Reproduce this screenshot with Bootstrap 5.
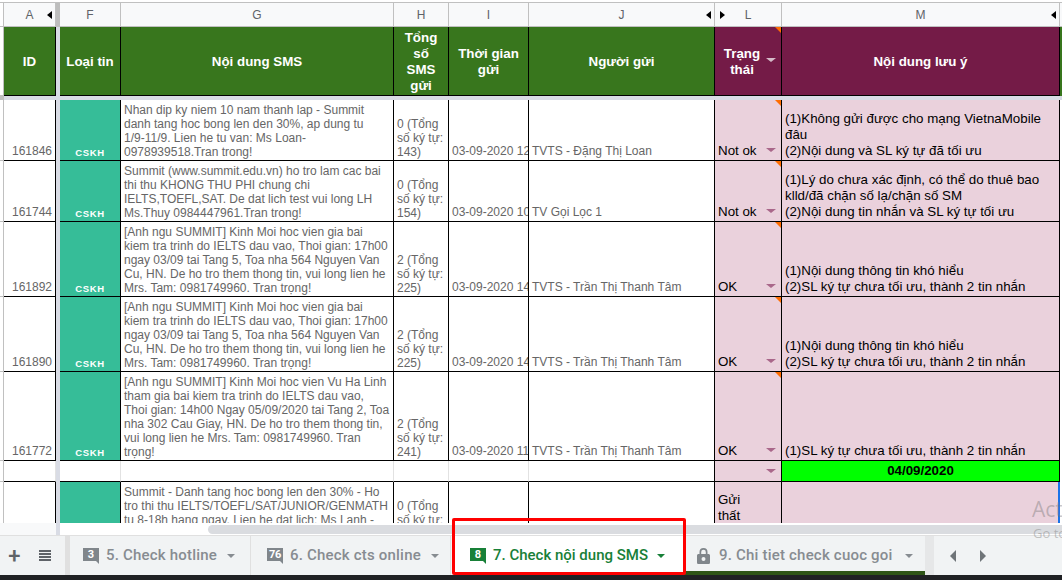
<!DOCTYPE html>
<html lang="vi">
<head>
  <meta charset="UTF-8" />
  <meta name="viewport" content="width=device-width, initial-scale=1" />
  <title>Check nội dung SMS</title>
  <link href="https://cdn.jsdelivr.net/npm/bootstrap@5.3.0/dist/css/bootstrap.min.css" rel="stylesheet" />
  <style>
    html, body { height: 100%; margin: 0; overflow: hidden; }
    body { font-family: "Liberation Sans", Arial, sans-serif; background: #fff; }

    /* vùng bảng tính */
    .sheet-wrap { height: 523px; padding-top: 2px; overflow: hidden; }
    .sheet-grid { table-layout: fixed; width: 1062px; border-collapse: separate; border-spacing: 0; border-top: 1px solid #c0c0c0; }
    .sheet-grid td, .sheet-grid th { padding: 0 3px; border-right: 1px solid #000; border-bottom: 1px solid #000; vertical-align: bottom; overflow: hidden; position: relative; }
    .sheet-grid .rh { padding: 0; border-right-color: #c0c0c0; border-bottom-color: #c0c0c0; background: #fff; }
    .sheet-grid .fz { padding: 0; border: 0; background: #d9dce5; }
    .sheet-grid .nn { padding: 0; border: 0; }

    .col-row td { height: 24px; background: #f8f9fa; border-right-color: #c0c0c0; border-bottom-color: #c0c0c0; color: #5f6368; font-size: 12px; text-align: center; vertical-align: middle; }
    .col-row td.fz { background: #bdbdbd; border-bottom: 1px solid #c0c0c0; }
    .col-row .nn { background: #f8f9fa; border-bottom: 1px solid #c0c0c0; }
    .hide-l::after, .hide-r::after { content: ""; position: absolute; top: 8px; border: 4px solid transparent; }
    .hide-l::after { right: 3px; border-left: 0; border-right: 5px solid #000; }
    .hide-r::after { left: 5px; border-right: 0; border-left: 5px solid #000; }

    .head-row th { height: 69px; padding-top: 2px; color: #fff; font-size: 13.33px; font-weight: 700; line-height: 16px; text-align: center; vertical-align: middle; }
    .head-row th.th-status { padding-right: 12px; padding-left: 0; }
    .bg-leaf { background: #38761d; }
    .bg-wine { background: #741b47; }
    .sep-row td { height: 4px; }
    .sep-row .fz-dark { background: #c0c0c0; }

    .r-61 { height: 61px; }
    .r-75 { height: 75px; }
    .r-89 { height: 89px; }
    .r-21 { height: 21px; }

    .cell-id { color: #666; font-size: 12px; line-height: 15px; text-align: right; padding-bottom: 1px !important; }
    .cell-type { background: #36bd98; color: #fff; font-size: 9.5px; font-weight: 700; letter-spacing: .6px; line-height: 12px; text-align: center; padding-bottom: 1px !important; }
    .cell-sms { color: #666; font-size: 12px; line-height: 14px; padding-bottom: 1px !important; }
    .cell-date { color: #666; font-size: 12px; line-height: 15px; white-space: nowrap; padding-bottom: 1px !important; }
    .cell-time { padding-right: 0 !important; }
    .cell-status { background: #ead1dc; color: #000; font-size: 13.33px; line-height: 16px; padding-bottom: 1px !important; }
    .cell-note { background: #ead1dc; color: #000; font-size: 13.33px; line-height: 16px; padding-bottom: 1px !important; }
    .cell-day { background: #00ff00; color: #000; font-size: 13.33px; font-weight: 700; text-align: center; vertical-align: middle !important; }
    .cell-blank { border-right-color: #e2e2e2 !important; }
    .cell-failed { padding-bottom: 2px !important; }
    .sel-edge { border-right: 2px solid #1a73e8 !important; }

    /* dấu ghi chú và mũi tên dropdown */
    .has-note::before { content: ""; position: absolute; top: 0; right: 0; border-top: 6px solid #ff6d01; border-left: 6px solid transparent; }
    .has-caret::after { content: ""; position: absolute; right: 5px; bottom: 8px; border-top: 4px solid #a9678a; border-left: 5px solid transparent; border-right: 5px solid transparent; }
    .caret-head::after { bottom: 33px; border-top-color: #d5bcc9; }

    /* thanh cuộn */
    .scroll-row { height: 13px; border-bottom: 1px solid #e0e0e0; background: #fff; }
    .scroll-left { width: 56px; background: #f8f9fa; }
    .scroll-fz { width: 4px; background: #d9dce5; }
    .scroll-gap { width: 148px; }
    .scroll-thumb { height: 9px; margin-top: 2px; border-radius: 5px 0 0 5px; background: #dadce0; }

    /* thanh tab */
    .tab-bar { height: 39px; background: #f1f3f4; font-family: Roboto, "Liberation Sans", sans-serif; font-size: 15px; font-weight: 500; color: #878c91; letter-spacing: .2px; white-space: nowrap; }
    .tab-tools { width: 65px; }
    .tool-plus { width: 29px; color: #5f6368; font-size: 22px; font-weight: 500; line-height: 1; }
    .tool-menu { width: 12px; height: 11px; margin-left: 10px; background: repeating-linear-gradient(#5f6368 0 2px, transparent 2px 3px); }
    .tab-sep { width: 5px; background: #e0e0e0; }
    .tab-sep-end { width: 9px; background: #e6e7e8; }
    .sheet-tab { gap: 7px; border-right: 1px solid #e0e0e0; }
    .tab-5 { width: 181px; padding-left: 13px; }
    .tab-6 { width: 200px; padding-left: 16px; margin-right: 2px; }
    .tab-7 { width: 230px; padding-left: 17px; margin-right: 1px; background: #fff; color: #188038; border-right: 0; letter-spacing: 0; }
    .tab-9 { width: 241px; padding-left: 13px; gap: 9px; border-right: 0; box-shadow: inset 0 -4px 0 #2f5517; }
    .tab-badge { flex-shrink: 0; width: 16px; height: 13px; background: #80868b; color: #fff; font-size: 11px; font-weight: 700; letter-spacing: 0; line-height: 13px; text-align: center; position: relative; margin-top: -2px; }
    .tab-badge::after { content: ""; position: absolute; right: 0; top: 13px; border-top: 3px solid #80868b; border-left: 3px solid transparent; }
    .badge-wide { letter-spacing: -.3px; }
    .tab-7 .tab-badge { background: #188038; }
    .tab-7 .tab-badge::after { border-top-color: #188038; }
    .tab-caret { margin-left: 3px; border-top: 4px solid currentColor; border-left: 4px solid transparent; border-right: 4px solid transparent; }
    .tab-7 .tab-caret { margin-left: 2px; }
    .tab-nav { gap: 24px; padding-left: 16px; }
    .nav-prev { border-top: 6px solid transparent; border-bottom: 6px solid transparent; border-right: 6px solid #6f7478; }
    .nav-next { border-top: 6px solid transparent; border-bottom: 6px solid transparent; border-left: 6px solid #6f7478; }
    .bottom-strip { height: 5px; background: #202124; }

    /* phần nằm đè lên trang */
    .page-shell { position: relative; height: 580px; overflow: hidden; }
    .red-box { position: absolute; left: 452px; top: 518px; width: 234px; height: 57px; border: 3px solid #f00; border-radius: 2px; pointer-events: none; }
    .win-mark { position: absolute; color: rgba(120, 120, 120, .42); font-family: "Open Sans", "Liberation Sans", sans-serif; line-height: 1; white-space: nowrap; }
    .win-title { left: 1032px; top: 499px; font-size: 21px; }
    .win-sub { left: 1033px; top: 527px; font-size: 13px; }
  </style>
</head>
<body>
<div class="page-shell">
  <div class="sheet-wrap">
    <table class="sheet-grid">
      <colgroup>
        <col style="width:4px"><col style="width:52px"><col style="width:4px"><col style="width:61px"><col style="width:273px"><col style="width:55px"><col style="width:80px"><col style="width:186px"><col style="width:67px"><col style="width:278px"><col style="width:2px">
      </colgroup>
      <tbody>
        <tr class="col-row">
          <td class="rh"></td><td class="hide-l">A</td><td class="fz"></td><td>F</td><td>G</td><td>H</td><td>I</td><td class="hide-l">J</td><td class="hide-r">L</td><td class="hide-l">M</td><td class="nn"></td>
        </tr>
        <tr class="head-row">
          <td class="rh"></td>
          <th class="bg-leaf">ID</th><td class="fz"></td>
          <th class="bg-leaf">Loại tin</th>
          <th class="bg-leaf">Nội dung SMS</th>
          <th class="bg-leaf">Tổng số SMS gửi</th>
          <th class="bg-leaf">Thời gian gửi</th>
          <th class="bg-leaf">Người gửi</th>
          <th class="bg-wine has-note has-caret caret-head th-status">Trạng thái</th>
          <th class="bg-wine">Nội dung lưu ý</th>
          <td class="nn bg-leaf"></td>
        </tr>
        <tr class="sep-row">
          <td class="fz fz-dark"></td><td class="fz"></td><td class="fz"></td><td class="fz"></td><td class="fz"></td><td class="fz"></td><td class="fz"></td><td class="fz"></td><td class="fz"></td><td class="fz"></td><td class="fz"></td>
        </tr>
        <tr class="r-61">
          <td class="rh"></td><td class="cell-id">161846</td><td class="fz"></td><td class="cell-type">CSKH</td>
          <td class="cell-sms">Nhan dip ky niem 10 nam thanh lap - Summit danh tang hoc bong len den 30%, ap dung tu<br>1/9-11/9. Lien he tu van: Ms Loan-<br>0978939518.Tran trong!</td>
          <td class="cell-sms">0 (Tổng số ký tự: 143)</td>
          <td class="cell-date cell-time">03-09-2020 12</td>
          <td class="cell-date">TVTS - Đặng Thị Loan</td>
          <td class="cell-status has-note has-caret">Not ok</td>
          <td class="cell-note">(1)Không gửi được cho mạng VietnaMobile đâu<br>(2)Nội dung và SL ký tự đã tối ưu</td>
          <td class="nn"></td>
        </tr>
        <tr class="r-61">
          <td class="rh"></td><td class="cell-id">161744</td><td class="fz"></td><td class="cell-type">CSKH</td>
          <td class="cell-sms">Summit (www.summit.edu.vn) ho tro lam cac bai thi thu KHONG THU PHI chung chi IELTS,TOEFL,SAT. De dat lich test vui long LH Ms.Thuy 0984447961.Tran trong!</td>
          <td class="cell-sms">0 (Tổng số ký tự: 154)</td>
          <td class="cell-date cell-time">03-09-2020 10</td>
          <td class="cell-date">TV Gọi Lọc 1</td>
          <td class="cell-status has-note has-caret">Not ok</td>
          <td class="cell-note">(1)Lý do chưa xác định, có thể do thuê bao klld/đã chặn số lạ/chặn số SM<br>(2)Nội dung tin nhắn và SL ký tự tối ưu</td>
          <td class="nn"></td>
        </tr>
        <tr class="r-75">
          <td class="rh"></td><td class="cell-id">161892</td><td class="fz"></td><td class="cell-type">CSKH</td>
          <td class="cell-sms">[Anh ngu SUMMIT] Kinh Moi hoc vien gia bai kiem tra trinh do IELTS dau vao, Thoi gian: 17h00 ngay 03/09 tai Tang 5, Toa nha 564 Nguyen Van Cu, HN. De ho tro them thong tin, vui long lien he Mrs. Tam: 0981749960. Tran trọng!</td>
          <td class="cell-sms">2 (Tổng số ký tự: 225)</td>
          <td class="cell-date cell-time">03-09-2020 14</td>
          <td class="cell-date">TVTS - Trần Thị Thanh Tâm</td>
          <td class="cell-status has-note has-caret">OK</td>
          <td class="cell-note">(1)Nội dung thông tin khó hiểu<br>(2)SL ký tự chưa tối ưu, thành 2 tin nhắn</td>
          <td class="nn"></td>
        </tr>
        <tr class="r-75">
          <td class="rh"></td><td class="cell-id">161890</td><td class="fz"></td><td class="cell-type">CSKH</td>
          <td class="cell-sms">[Anh ngu SUMMIT] Kinh Moi hoc vien gia bai kiem tra trinh do IELTS dau vao, Thoi gian: 17h00 ngay 03/09 tai Tang 5, Toa nha 564 Nguyen Van Cu, HN. De ho tro them thong tin, vui long lien he Mrs. Tam: 0981749960. Tran trọng!</td>
          <td class="cell-sms">2 (Tổng số ký tự: 225)</td>
          <td class="cell-date cell-time">03-09-2020 14</td>
          <td class="cell-date">TVTS - Trần Thị Thanh Tâm</td>
          <td class="cell-status has-note has-caret">OK</td>
          <td class="cell-note">(1)Nội dung thông tin khó hiểu<br>(2)SL ký tự chưa tối ưu, thành 2 tin nhắn</td>
          <td class="nn"></td>
        </tr>
        <tr class="r-89">
          <td class="rh"></td><td class="cell-id">161772</td><td class="fz"></td><td class="cell-type">CSKH</td>
          <td class="cell-sms">[Anh ngu SUMMIT] Kinh Moi hoc vien Vu Ha Linh tham gia bai kiem tra trinh do IELTS dau vao, Thoi gian: 14h00 Ngay 05/09/2020 tai Tang 2, Toa nha 302 Cau Giay, HN. De ho tro them thong tin, vui long lien he Mrs. Tam: 0981749960. Tran trọng!</td>
          <td class="cell-sms">2 (Tổng số ký tự: 241)</td>
          <td class="cell-date cell-time">03-09-2020 11</td>
          <td class="cell-date">TVTS - Trần Thị Thanh Tâm</td>
          <td class="cell-status has-note has-caret">OK</td>
          <td class="cell-note">(1)SL ký tự chưa tối ưu, thành 2 tin nhắn</td>
          <td class="nn"></td>
        </tr>
        <tr class="r-21">
          <td class="rh"></td><td class="cell-blank"></td><td class="fz"></td><td class="cell-blank"></td><td class="cell-blank"></td><td class="cell-blank"></td><td class="cell-blank"></td><td></td>
          <td class="cell-status has-caret"></td>
          <td class="cell-day">04/09/2020</td>
          <td class="nn"></td>
        </tr>
        <tr class="r-61">
          <td class="rh"></td><td></td><td class="fz"></td><td class="cell-type"></td>
          <td class="cell-sms">Summit - Danh tang hoc bong len den 30% - Ho tro thi thu IELTS/TOEFL/SAT/JUNIOR/GENMATH tu 8-18h hang ngay. Lien he dat lich: Ms Lanh -<br>&nbsp;</td>
          <td class="cell-sms">0 (Tổng số ký tự:<br>&nbsp;</td>
          <td class="cell-date"></td>
          <td class="cell-date"></td>
          <td class="cell-status cell-failed">Gửi<br>thất<br>&nbsp;</td>
          <td class="cell-note sel-edge"></td>
          <td class="nn"></td>
        </tr>
      </tbody>
    </table>
  </div>

  <div class="scroll-row d-flex">
    <div class="scroll-left"></div>
    <div class="scroll-fz"></div>
    <div class="scroll-gap"></div>
    <div class="scroll-thumb flex-grow-1"></div>
  </div>

  <div class="tab-bar d-flex">
    <div class="tab-tools d-flex align-items-center">
      <span class="tool-plus text-center">+</span>
      <span class="tool-menu"></span>
    </div>
    <div class="tab-sep"></div>
    <div class="sheet-tab tab-5 d-flex align-items-center"><span class="tab-badge">3</span><span>5. Check hotline</span><span class="tab-caret"></span></div>
    <div class="sheet-tab tab-6 d-flex align-items-center"><span class="tab-badge badge-wide">76</span><span>6. Check cts online</span><span class="tab-caret"></span></div>
    <div class="sheet-tab tab-7 d-flex align-items-center"><span class="tab-badge">8</span><span>7. Check nội dung SMS</span><span class="tab-caret"></span></div>
    <div class="sheet-tab tab-9 d-flex align-items-center">
      <svg width="13" height="16" viewBox="0 0 13 16" aria-hidden="true"><path fill="#80868b" d="M6.5 0A4 4 0 0 0 2.5 4v2H1.6C.7 6 0 6.7 0 7.6v6.8C0 15.3.7 16 1.6 16h9.8c.9 0 1.6-.7 1.6-1.6V7.6C13 6.7 12.3 6 11.4 6h-.9V4a4 4 0 0 0-4-4zm0 1.7A2.3 2.3 0 0 1 8.8 4v2H4.2V4a2.3 2.3 0 0 1 2.3-2.3zm0 7.2a2 2 0 1 1 0 4 2 2 0 0 1 0-4z"/></svg>
      <span>9. Chi tiet check cuoc goi</span><span class="tab-caret"></span>
    </div>
    <div class="tab-sep tab-sep-end"></div>
    <div class="tab-nav d-flex align-items-center"><span class="nav-prev"></span><span class="nav-next"></span></div>
  </div>
  <div class="bottom-strip"></div>

  <div class="red-box"></div>
  <div class="win-mark win-title">Act</div>
  <div class="win-mark win-sub">Go to</div>
</div>
<script src="https://cdn.jsdelivr.net/npm/bootstrap@5.3.0/dist/js/bootstrap.bundle.min.js"></script>
</body>
</html>
